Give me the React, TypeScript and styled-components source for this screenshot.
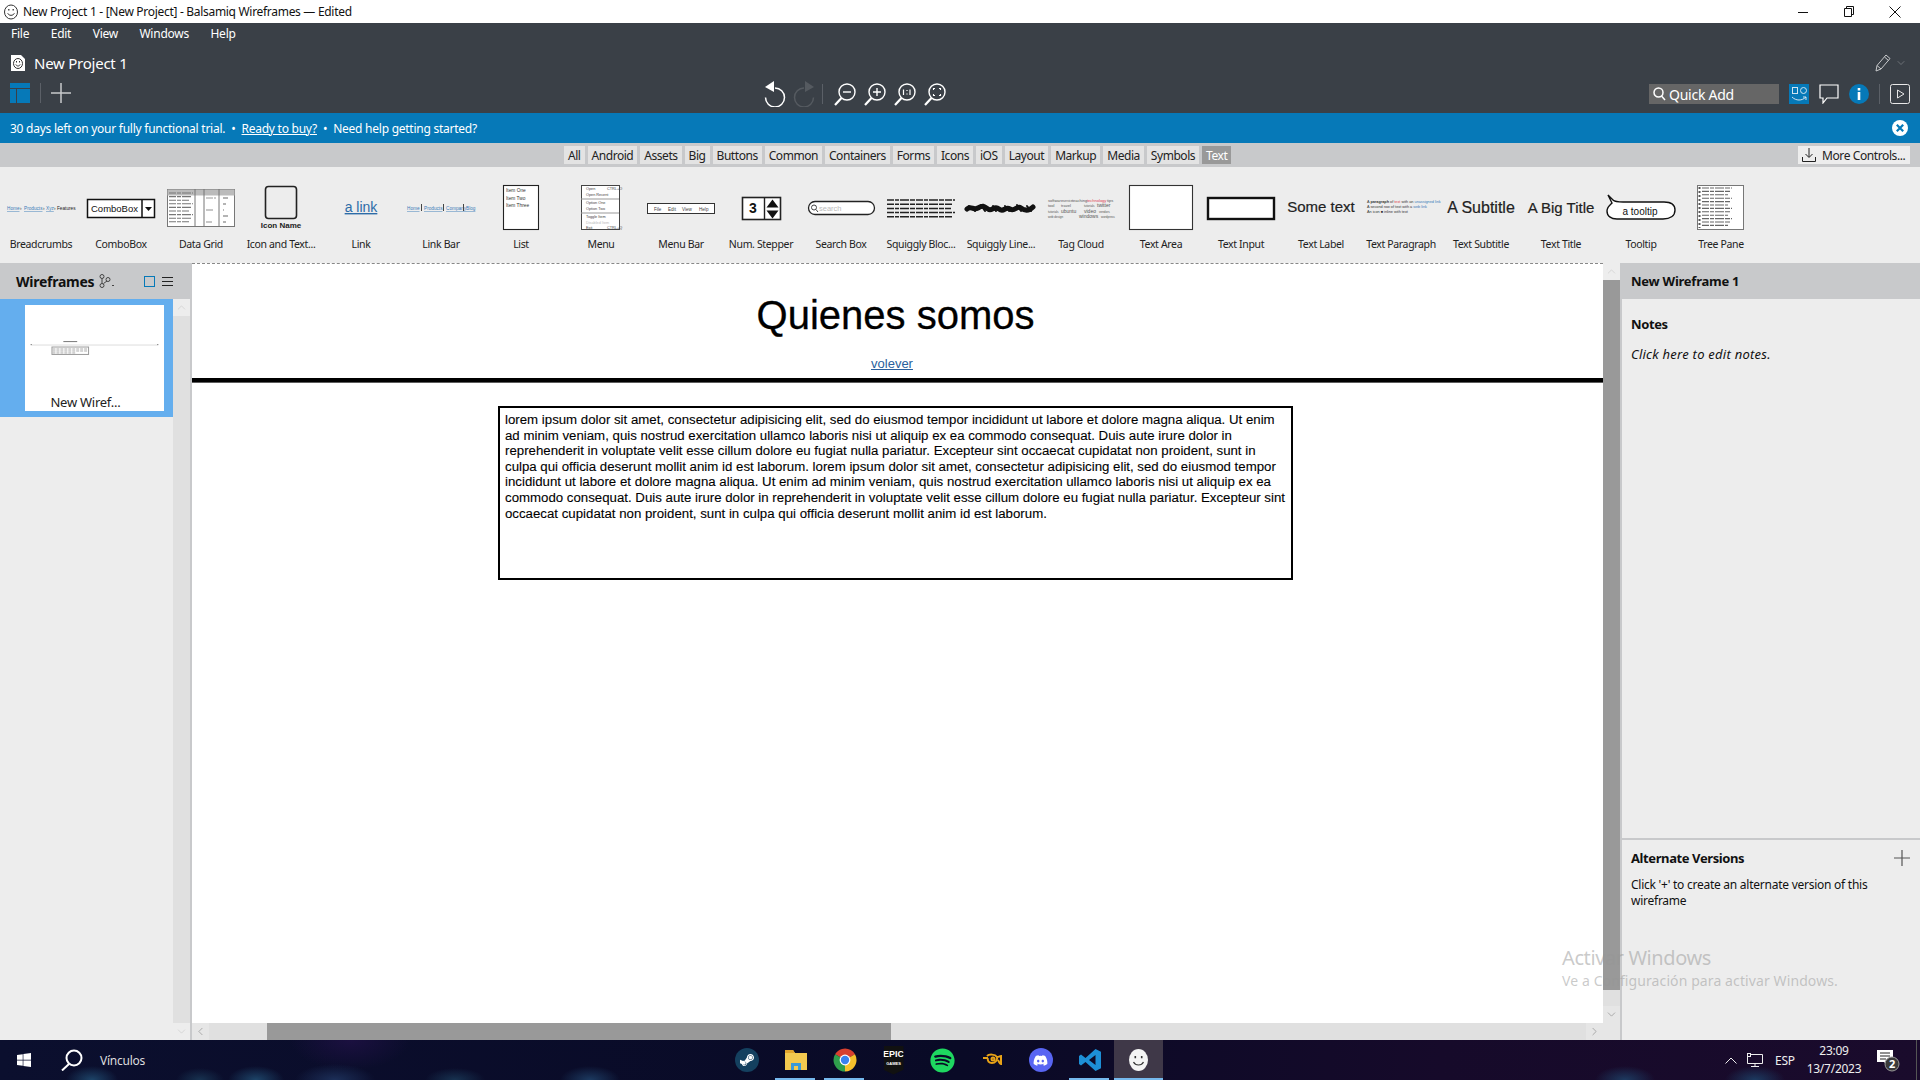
import React from 'react';
import styled, { createGlobalStyle } from 'styled-components';
import { FaDiscord, FaSpotify, FaSteamSymbol, FaWindows } from 'react-icons/fa';
import { ChevronDown, ChevronLeft, ChevronRight, ChevronUp } from 'lucide-react';

const UI_FONT = '"Noto Sans", "Open Sans", sans-serif';
const SKETCH_FONT = '"Liberation Sans", Arial, sans-serif';

const GlobalStyle = createGlobalStyle`
    html, body {
        margin: 0;
        padding: 0;
        background: #ededed;
    }
    body {
        font-family: ${UI_FONT};
        font-size: 12px;
        letter-spacing: -0.25px;
    }
    * {
        box-sizing: border-box;
    }
`;

const Page = styled.div`
    position: relative;
    display: flex;
    flex-direction: column;
    width: 1920px;
    height: 1080px;
    overflow: hidden;
`;

const TitleBar = styled.div`
    display: flex;
    align-items: center;
    height: 23px;
    background: #fff;
    color: #111;
    padding-left: 3px;
`;

const TitleText = styled.span`
    margin-left: 4px;
    letter-spacing: -0.3px;
    white-space: nowrap;
`;

const WindowButtons = styled.div`
    display: flex;
    margin-left: auto;
    margin-right: 2px;
`;

const WindowButton = styled.div`
    display: flex;
    align-items: center;
    justify-content: center;
    width: 46px;
    height: 23px;
`;

const Header = styled.div`
    display: flex;
    flex-direction: column;
    height: 90px;
    background: #3a4047;
    color: #fff;
`;

const MenuRow = styled.div`
    display: flex;
    align-items: center;
    gap: 21.5px;
    height: 20px;
    padding-left: 11px;
`;

const ProjectRow = styled.div`
    display: flex;
    align-items: center;
    height: 38px;
    padding: 2px 13px 0 11px;
`;

const ProjectName = styled.span`
    margin-left: 9px;
    font-size: 15px;
`;

const EditTools = styled.div`
    display: flex;
    align-items: center;
    gap: 4px;
    margin-left: auto;
`;

const ToolRow = styled.div`
    display: flex;
    align-items: flex-start;
    height: 32px;
    padding: 2px 10px 0 0;
`;

const LeftTools = styled.div`
    display: flex;
    align-items: center;
    gap: 10px;
    width: 764px;
    height: 20px;
    padding-left: 10px;
`;

const CenterTools = styled.div`
    display: flex;
    align-items: center;
    gap: 7px;
    height: 26px;
    margin-top: -2px;
`;

const ZoomTools = styled.div`
    display: flex;
    gap: 6px;
    margin-left: 3px;
`;

const RightTools = styled.div`
    display: flex;
    align-items: center;
    gap: 10px;
    height: 20px;
    margin-top: 1px;
    margin-left: auto;
`;

const ToolDivider = styled.div`
    width: 1px;
    height: 20px;
    background: #5b6067;
`;

const QuickAdd = styled.div`
    display: flex;
    align-items: center;
    gap: 3px;
    width: 130px;
    height: 20px;
    padding-left: 4px;
    background: #666;
    font-size: 14px;
`;

const TrialBar = styled.div`
    display: flex;
    align-items: center;
    height: 30px;
    padding: 0 12px 0 10px;
    background: #0679b8;
    color: #fff;
    font-size: 12px;
`;

const TrialDot = styled.span`
    margin: 0 6px;
`;

const TrialLink = styled.span`
    text-decoration: underline;
`;

const TrialClose = styled.div`
    display: flex;
    margin-left: auto;
`;

const TabBar = styled.div`
    display: flex;
    align-items: center;
    gap: 3px;
    height: 24px;
    padding: 0 10px 0 564px;
    background: #c8c9cb;
    color: #222;
`;

const Tab = styled.div<{ $active?: boolean }>`
    height: 18px;
    padding: 0 4px;
    line-height: 19px;
    letter-spacing: -0.45px;
    white-space: nowrap;
    background: ${props => (props.$active ? '#999' : '#e3e3e3')};
    color: ${props => (props.$active ? '#fff' : '#222')};
`;

const MoreControls = styled.div`
    display: flex;
    align-items: center;
    gap: 6px;
    width: 112px;
    height: 18px;
    margin-left: auto;
    padding-left: 4px;
    background: #ededed;
    letter-spacing: -0.4px;
    white-space: nowrap;
`;

const Library = styled.div`
    display: flex;
    height: 96px;
    padding: 8px 0 0 1px;
    background: #ededed;
`;

const LibraryItem = styled.div`
    display: flex;
    flex-direction: column;
    align-items: center;
    width: 80px;
`;

const PreviewSvg = styled.svg`
    display: block;
    width: 80px;
    height: 62px;
    font-family: ${SKETCH_FONT};
    letter-spacing: 0;
`;

const ItemLabel = styled.div`
    height: 14px;
    font-size: 10.5px;
    letter-spacing: -0.35px;
    line-height: 14px;
    color: #222;
    white-space: nowrap;
`;

const Main = styled.div`
    display: flex;
    flex: 1;
    min-height: 0;
`;

const LeftPanel = styled.div`
    display: flex;
    flex-direction: column;
    width: 192px;
    border-right: 2px solid #c8c9cb;
    background: #ededed;
`;

const PanelHeader = styled.div`
    display: flex;
    align-items: center;
    height: 36px;
    background: #c8c9cb;
    color: #111;
    font-size: 14px;
    font-weight: 700;
`;

const WireframesHeader = styled(PanelHeader)`
    padding-left: 16px;
`;

const HeaderIcons = styled.div`
    display: flex;
    align-items: center;
    gap: 7px;
    margin-left: 29px;
`;

const BranchIcon = styled.div`
    display: flex;
    margin-left: 5px;
`;

const ThumbArea = styled.div`
    display: flex;
    flex: 1;
    min-height: 0;
`;

const ThumbList = styled.div`
    flex: 1;
`;

const ThumbRow = styled.div`
    height: 118px;
    padding: 6px 9px 0 25px;
    background: #64aeee;
`;

const ThumbCard = styled.div`
    display: flex;
    flex-direction: column;
    align-items: center;
    height: 106px;
    background: #fff;
`;

const ThumbLabel = styled.div`
    margin-top: -1px;
    margin-right: 18px;
    font-size: 13px;
    color: #222;
`;

const ScrollColumn = styled.div`
    display: flex;
    flex-direction: column;
    width: 17px;
    background: #e0e0e0;
`;

const ScrollButton = styled.div`
    display: flex;
    align-items: center;
    justify-content: center;
    flex: none;
    width: 17px;
    height: 17px;
    background: #ededed;
    color: #c4c4c4;
`;

const DarkScrollButton = styled(ScrollButton)`
    background: #e6e6e6;
    color: #8a8a8a;
`;

const Spacer = styled.div`
    flex: 1;
`;

const VerticalThumb = styled.div`
    flex: none;
    height: 710px;
    background: #999;
`;

const CenterColumn = styled.div`
    display: flex;
    flex-direction: column;
    width: 1428px;
`;

const CanvasRow = styled.div`
    display: flex;
    flex: 1;
    min-height: 0;
`;

const Canvas = styled.div`
    flex: 1;
    border-top: 1px dashed #888;
    background: #fff;
    font-family: ${SKETCH_FONT};
    letter-spacing: 0;
    color: #000;
`;

const SketchTitle = styled.div`
    height: 42px;
    margin-top: 30px;
    padding-right: 4px;
    font-size: 40px;
    line-height: 42px;
    text-align: center;
    -webkit-text-stroke: 0.3px #000;
`;

const SketchLink = styled.div`
    margin-top: 20px;
    padding-right: 11px;
    font-size: 13px;
    line-height: 16px;
    text-align: center;
    color: #2a5f9c;
    text-decoration: underline;
`;

const SketchRule = styled.div`
    height: 5px;
    margin-top: 6px;
    background: linear-gradient(#000 80%, #bbb);
`;

const SketchBox = styled.div`
    width: 795px;
    height: 174px;
    margin: 23px 0 0 306px;
    padding: 4px 0 0 5px;
    border: 2px solid #000;
`;

const SketchLine = styled.div`
    height: 15.6px;
    font-size: 13.25px;
    line-height: 15.6px;
    white-space: nowrap;
    -webkit-text-stroke: 0.1px #000;
`;

const HorizontalScroll = styled.div`
    display: flex;
    flex: none;
    height: 17px;
    background: #e0e0e0;
`;

const HorizontalTrack = styled.div`
    flex: none;
    width: 58px;
`;

const HorizontalThumb = styled.div`
    flex: none;
    width: 624px;
    background: #999;
`;

const RightPanel = styled.div`
    display: flex;
    flex-direction: column;
    flex: 1;
    border-left: 2px solid #c8c9cb;
    background: #ededed;
    color: #111;
`;

const RightHeader = styled(PanelHeader)`
    padding-left: 9px;
    font-size: 13px;
`;

const NotesBlock = styled.div`
    flex: 1;
    padding: 16px 9px 0;
`;

const SectionTitle = styled.div`
    font-size: 13px;
    font-weight: 700;
    letter-spacing: -0.4px;
    line-height: 18px;
`;

const NotesHint = styled.div`
    margin-top: 12px;
    font-size: 13px;
    font-style: italic;
    letter-spacing: 0.25px;
    line-height: 18px;
`;

const VersionsBlock = styled.div`
    height: 202px;
    padding: 9px 10px 0 9px;
    border-top: 2px solid #c8c9cb;
`;

const VersionsHead = styled.div`
    display: flex;
    align-items: center;
    justify-content: space-between;
`;

const VersionsText = styled.div`
    width: 250px;
    margin-top: 10px;
    line-height: 16px;
`;

const Taskbar = styled.div`
    display: flex;
    flex: none;
    align-items: stretch;
    height: 40px;
    color: #ddd;
    background:
        radial-gradient(26px 14px at 92px 100%, #1d4468, transparent),
        radial-gradient(24px 12px at 200px 100%, #173250, transparent),
        radial-gradient(28px 14px at 256px 100%, #1d4468, transparent),
        radial-gradient(40px 16px at 335px 100%, #1c2f58, transparent),
        radial-gradient(30px 12px at 455px 100%, #173250, transparent),
        radial-gradient(30px 14px at 590px 100%, #1c3a60, transparent),
        radial-gradient(30px 14px at 1625px 100%, #1d3a60, transparent),
        radial-gradient(30px 14px at 1755px 100%, #1c3a60, transparent),
        radial-gradient(60px 30px at 350px 0, #1b1040, transparent),
        linear-gradient(90deg, #0b0f2e, #090a26 50%, #160a2a 75%, #1a0b2c);
`;

const TaskLeft = styled.div`
    display: flex;
    align-items: center;
    flex: none;
    width: 722px;
`;

const StartTile = styled.div`
    display: flex;
    align-items: center;
    justify-content: center;
    width: 48px;
`;

const SearchTile = styled(StartTile)`
    margin-right: 4px;
`;

const TaskTile = styled.div<{ $open?: boolean; $active?: boolean }>`
    position: relative;
    display: flex;
    align-items: center;
    justify-content: center;
    flex: none;
    width: 49px;
    background: ${props => (props.$active ? '#3f3848' : 'transparent')};

    &::after {
        content: '';
        display: ${props => (props.$open ? 'block' : 'none')};
        position: absolute;
        left: ${props => (props.$active ? '0' : '4px')};
        right: ${props => (props.$active ? '0' : '5px')};
        bottom: 0;
        height: 2px;
        background: #76b9ed;
    }
`;

const EpicBadge = styled.div`
    display: flex;
    flex-direction: column;
    align-items: center;
    width: 20px;
    height: 29px;
    padding-top: 3px;
    background: #111;
    clip-path: polygon(0 0, 100% 0, 100% 84%, 50% 100%, 0 84%);
    color: #fff;
    font-family: ${SKETCH_FONT};
    font-weight: 700;
    letter-spacing: 0;
`;

const EpicWord = styled.span`
    font-size: 9px;
    line-height: 11px;
`;

const EpicSmall = styled.span`
    font-size: 4px;
    line-height: 7px;
`;

const Tray = styled.div`
    display: flex;
    align-items: center;
    margin-left: auto;
`;

const TrayCell = styled.div<{ $width: number }>`
    display: flex;
    align-items: center;
    justify-content: center;
    width: ${props => props.$width}px;
    color: #eee;
`;

const Clock = styled.div`
    display: flex;
    flex-direction: column;
    align-items: center;
    width: 62px;
    line-height: 18px;
    color: #eee;
    white-space: nowrap;
`;

const ShowDesktop = styled.div`
    align-self: stretch;
    width: 9px;
    margin-left: 0;
    padding-left: 5px;

    &::before {
        content: '';
        display: block;
        width: 1px;
        height: 100%;
        background: #555;
    }
`;

const Watermark = styled.div`
    position: absolute;
    left: 1562px;
    top: 944px;
    color: rgba(150, 150, 150, 0.5);
    pointer-events: none;
    white-space: nowrap;
`;

const WatermarkTitle = styled.div`
    font-size: 20px;
    letter-spacing: -0.4px;
    line-height: 28px;
`;

const WatermarkText = styled.div`
    font-size: 14px;
    letter-spacing: 0.1px;
    line-height: 18px;
`;

const Magnifier = ({ children }: { children?: React.ReactNode }) => (
    <svg width="24" height="24" viewBox="0 0 24 24" fill="none" stroke="#fff" strokeWidth="1.4">
        <circle cx="14" cy="10" r="8" />
        <path d="M8.5 16 L2 23" strokeWidth="2.2" />
        {children}
    </svg>
);

const UndoIcon = ({ color, flip }: { color: string; flip?: boolean }) => (
    <svg
        width="22"
        height="26"
        viewBox="0 0 22 26"
        fill="none"
        stroke={color}
        strokeWidth="1.5"
        style={flip ? { transform: 'scaleX(-1)' } : undefined}
    >
        <path d="M11 7 A9.5 9.5 0 1 1 1.5 16.5" />
        <path d="M10 0 L10 11 L1 6 Z" fill={color} stroke="none" />
    </svg>
);

const Smiley = ({ size, color }: { size: number; color: string }) => (
    <svg width={size} height={size} viewBox="0 0 16 16" fill="none" stroke={color} strokeWidth="1">
        <ellipse cx="8" cy="8" rx="6.5" ry="7" />
        <path d="M4.7 9.3 C6 12 10 12 11.4 9.3" />
        <path d="M5.8 5 V6.6 M10.2 5 V6.6" strokeWidth="1.3" />
    </svg>
);

const TinyLines = ({ x, y, rows, width, gap, color = '#222', weight = 1.1 }: { x: number; y: number; rows: number; width: number; gap: number; color?: string; weight?: number }) => (
    <g stroke={color} strokeWidth={weight} strokeDasharray="7 1 4 1 9 1 5 1">
        {Array.from({ length: rows }).map((_, i) => (
            <line key={i} x1={x} y1={y + i * gap} x2={x + width - (i % 3) * 2} y2={y + i * gap} />
        ))}
    </g>
);

const previews: Record<string, React.ReactNode> = {
    Breadcrumbs: (
        <g fontSize="4.7">
            <text x="6" y="35" fill="#3b7cb8" textDecoration="underline">Home</text>
            <text x="19" y="35" fill="#333">›</text>
            <text x="23" y="35" fill="#3b7cb8" textDecoration="underline">Products</text>
            <text x="42" y="35" fill="#333">›</text>
            <text x="45" y="35" fill="#3b7cb8" textDecoration="underline">Xyz</text>
            <text x="53" y="35" fill="#333">›</text>
            <text x="56" y="35" fill="#222">Features</text>
        </g>
    ),
    ComboBox: (
        <g>
            <rect x="6.5" y="24.5" width="67" height="18" fill="#fff" stroke="#111" strokeWidth="1.5" />
            <line x1="61" y1="24" x2="61" y2="43" stroke="#111" strokeWidth="1.5" />
            <path d="M64 32 H71 L67.5 36 Z" fill="#111" />
            <text x="10" y="37" fontSize="9.5" fill="#111">ComboBox</text>
        </g>
    ),
    'Data Grid': (
        <g>
            <rect x="6.5" y="14.5" width="67" height="37" fill="#fff" stroke="#777" />
            <rect x="6.5" y="14.5" width="67" height="6" fill="#bbb" />
            <line x1="34" y1="14" x2="34" y2="52" stroke="#777" />
            <line x1="43" y1="14" x2="43" y2="52" stroke="#777" />
            <line x1="58" y1="14" x2="58" y2="52" stroke="#777" />
            <TinyLines x={8} y={18} rows={9} width={24} gap={3.6} color="#777" />
            <TinyLines x={45} y={23} rows={3} width={10} gap={12} color="#999" />
            <TinyLines x={62} y={23} rows={5} width={5} gap={6} color="#777" />
        </g>
    ),
    'Icon and Text...': (
        <g>
            <rect x="24.5" y="11.5" width="31" height="32" rx="3" fill="none" stroke="#222" strokeWidth="1.6" />
            <text x="40" y="53" fontSize="8" fill="#222" textAnchor="middle" fontWeight="700">Icon Name</text>
        </g>
    ),
    Link: <text x="40" y="37" fontSize="14" fill="#2d6ca8" textAnchor="middle" textDecoration="underline">a link</text>,
    'Link Bar': (
        <g fontSize="4.7" fill="#3b7cb8" textDecoration="underline">
            <text x="6" y="35">Home</text>
            <text x="23" y="35">Products</text>
            <text x="45" y="35">Company</text>
            <text x="65" y="35">Blog</text>
            <path d="M20.5 29 V36 M42.5 29 V36 M62.5 29 V36" stroke="#444" />
        </g>
    ),
    List: (
        <g>
            <rect x="22.5" y="10.5" width="35" height="44" fill="#fff" stroke="#222" strokeWidth="1.1" />
            <g fontSize="4.8" fill="#333">
                <text x="25" y="17">Item One</text>
                <text x="25" y="24.5">Item Two</text>
                <text x="25" y="32">Item Three</text>
            </g>
        </g>
    ),
    Menu: (
        <g>
            <rect x="20.5" y="10.5" width="38" height="44" fill="#fff" stroke="#444" />
            <g fontSize="3.8" fill="#444">
                <text x="25" y="15">Open</text>
                <text x="46" y="15">CTRL+O</text>
                <text x="25" y="21">Open Recent</text>
                <text x="25" y="29">Option One</text>
                <text x="25" y="35">Option Two</text>
                <text x="25" y="43">Toggle Item</text>
                <text x="25" y="49" fill="#bbb">Disabled Item</text>
                <text x="25" y="54">Exit</text>
                <text x="46" y="54">CTRL+Q</text>
            </g>
            <path d="M20 24 H58 M20 38 H58" stroke="#999" strokeWidth="1.2" />
        </g>
    ),
    'Menu Bar': (
        <g>
            <rect x="6.5" y="28.5" width="67" height="10" fill="#fff" stroke="#333" />
            <g fontSize="4.6" fill="#444">
                <text x="13" y="35.5">File</text>
                <text x="27" y="35.5">Edit</text>
                <text x="41" y="35.5">View</text>
                <text x="58" y="35.5">Help</text>
            </g>
        </g>
    ),
    'Num. Stepper': (
        <g>
            <rect x="21.5" y="22.5" width="38" height="22" fill="#fff" stroke="#222" strokeWidth="1.6" />
            <line x1="43.5" y1="22" x2="43.5" y2="45" stroke="#222" strokeWidth="1.4" />
            <text x="32" y="38" fontSize="14" fontWeight="700" textAnchor="middle" fill="#111">3</text>
            <path d="M45.5 32.5 L51.5 24.5 L57.5 32.5 Z M45.5 35.5 H57.5 L51.5 43.5 Z" fill="#111" />
        </g>
    ),
    'Search Box': (
        <g>
            <rect x="7.5" y="26.5" width="66" height="13" rx="6.5" fill="#fff" stroke="#222" strokeWidth="1.3" />
            <circle cx="13" cy="32.5" r="2.5" fill="none" stroke="#444" />
            <path d="M15 34.5 L17 37" stroke="#444" />
            <text x="18" y="35.5" fontSize="7.5" fill="#bbb">search</text>
        </g>
    ),
    'Squiggly Bloc...': (
        <g transform="translate(6 23)">
            <TinyLines x={0} y={2} rows={5} width={68} gap={4.2} weight={1.5} />
        </g>
    ),
    'Squiggly Line...': (
        <g fill="none" stroke="#111" strokeLinecap="round">
            <path d="M6 34 C10 30 12 36 17 33 S23 31 27 34 S33 30 38 34 S44 31 49 34 S56 30 60 33 S68 36 72 32" strokeWidth="5" />
            <path d="M8 31 L14 36 M20 30 L24 36 M32 31 L35 36 M44 31 L48 36 M56 30 L60 36 M66 31 L70 36" strokeWidth="2" />
        </g>
    ),
    'Tag Cloud': (
        <g fontSize="4" fill="#555">
            <text x="7" y="27">software</text>
            <text x="22" y="27" fontSize="3">service</text>
            <text x="31" y="27">teaching</text>
            <text x="46" y="27" fill="#e04050">technology</text>
            <text x="66" y="27">tips</text>
            <text x="7" y="32">tool</text>
            <text x="20" y="32">travel</text>
            <text x="43" y="32" fontSize="3">tutorials</text>
            <text x="56" y="32" fontSize="5">twitter</text>
            <text x="7" y="37.5" fontSize="3">tutorials</text>
            <text x="20" y="37.5" fontSize="5">ubuntu</text>
            <text x="43" y="37.5" fontSize="5">video</text>
            <text x="58" y="37.5" fontSize="3">vendors</text>
            <text x="7" y="42.5" fontSize="3">web design</text>
            <text x="38" y="42.5" fontSize="5">windows</text>
            <text x="60" y="42.5" fontSize="3">wordpress</text>
        </g>
    ),
    'Text Area': <rect x="8.5" y="10.5" width="63" height="44" fill="#fff" stroke="#333" strokeWidth="1.1" />,
    'Text Input': <rect x="7" y="23" width="66" height="21" fill="#fff" stroke="#111" strokeWidth="2.4" />,
    'Text Label': <text x="40" y="37" fontSize="15" fill="#222" stroke="#222" strokeWidth="0.2" textAnchor="middle">Some text</text>,
    'Text Paragraph': (
        <g fontSize="3.8" fill="#333">
            <text x="6" y="28">A <tspan fontWeight="700">paragraph</tspan> of <tspan fill="#e04050">text</tspan> with an <tspan fill="#3b7cb8">unassigned link</tspan></text>
            <text x="6" y="33">A second row of text with a <tspan fill="#3b7cb8">web link</tspan></text>
            <text x="6" y="38">An icon ■ inline with text</text>
        </g>
    ),
    'Text Subtitle': <text x="40" y="37.5" fontSize="16" fill="#222" stroke="#222" strokeWidth="0.2" textAnchor="middle">A Subtitle</text>,
    'Text Title': <text x="40" y="38" fontSize="15" fill="#222" stroke="#222" strokeWidth="0.2" textAnchor="middle">A Big Title</text>,
    Tooltip: (
        <g>
            <path
                d="M7 20 L12 25 C14 27 18 27 22 27 H63 C70 27 74 30 74 35 C74 41 69 44 62 44 H16 C10 44 6 41 6 36 C6 32 9 30 11 28 Z"
                fill="#fff"
                stroke="#111"
                strokeWidth="1.4"
            />
            <text x="39" y="40" fontSize="10" fill="#111" textAnchor="middle">a tooltip</text>
        </g>
    ),
    'Tree Pane': (
        <g>
            <rect x="16.5" y="10.5" width="46" height="44" fill="#fff" stroke="#777" />
            <TinyLines x={21} y={13} rows={12} width={30} gap={3.4} color="#666" />
            <line x1="18.5" y1="12" x2="18.5" y2="53" stroke="#555" strokeWidth="2" strokeDasharray="2 2" />
        </g>
    ),
};

const tabs = ['All', 'Android', 'Assets', 'Big', 'Buttons', 'Common', 'Containers', 'Forms', 'Icons', 'iOS', 'Layout', 'Markup', 'Media', 'Symbols'];

const bodyLines = [
    'lorem ipsum dolor sit amet, consectetur adipisicing elit, sed do eiusmod tempor incididunt ut labore et dolore magna aliqua. Ut enim',
    'ad minim veniam, quis nostrud exercitation ullamco laboris nisi ut aliquip ex ea commodo consequat. Duis aute irure dolor in',
    'reprehenderit in voluptate velit esse cillum dolore eu fugiat nulla pariatur. Excepteur sint occaecat cupidatat non proident, sunt in',
    'culpa qui officia deserunt mollit anim id est laborum. lorem ipsum dolor sit amet, consectetur adipisicing elit, sed do eiusmod tempor',
    'incididunt ut labore et dolore magna aliqua. Ut enim ad minim veniam, quis nostrud exercitation ullamco laboris nisi ut aliquip ex ea',
    'commodo consequat. Duis aute irure dolor in reprehenderit in voluptate velit esse cillum dolore eu fugiat nulla pariatur. Excepteur sint',
    'occaecat cupidatat non proident, sunt in culpa qui officia deserunt mollit anim id est laborum.',
];

const App = () => (
    <Page>
        <GlobalStyle />
        <TitleBar>
            <Smiley size={16} color="#333" />
            <TitleText>New Project 1 - [New Project] - Balsamiq Wireframes — Edited</TitleText>
            <WindowButtons>
                <WindowButton>
                    <svg width="10" height="10" stroke="#111"><path d="M0 5.5 H10" /></svg>
                </WindowButton>
                <WindowButton>
                    <svg width="10" height="11" fill="none" stroke="#111"><path d="M0.5 2.5 H7.5 V10.5 H0.5 Z M2.5 2.5 V0.5 H9.5 V8.5 H7.5" /></svg>
                </WindowButton>
                <WindowButton>
                    <svg width="12" height="12" stroke="#111"><path d="M0.5 0.5 L11.5 11.5 M11.5 0.5 L0.5 11.5" /></svg>
                </WindowButton>
            </WindowButtons>
        </TitleBar>

        <Header>
            <MenuRow>
                <span>File</span>
                <span>Edit</span>
                <span>View</span>
                <span>Windows</span>
                <span>Help</span>
            </MenuRow>
            <ProjectRow>
                <svg width="14" height="16" viewBox="0 0 14 16">
                    <path d="M0 0 H10 L14 4 V16 H0 Z" fill="#fff" />
                    <ellipse cx="7" cy="8.5" rx="4.5" ry="5" fill="none" stroke="#333" />
                    <path d="M4.8 9.5 C6 11.5 8 11.5 9.2 9.5 M5.5 6 V7.5 M8.5 6 V7.5" fill="none" stroke="#333" />
                </svg>
                <ProjectName>New Project 1</ProjectName>
                <EditTools>
                    <svg width="16" height="18" viewBox="0 0 16 18" fill="none" stroke="#c8cacc">
                        <path d="M1 17 L2 11.5 L11 1 L15 4.5 L6 15 Z M9.5 3 L13.5 6.5 M2 11.5 L6 15" />
                    </svg>
                    <ChevronDown size={12} color="#8d9095" strokeWidth={1.2} />
                </EditTools>
            </ProjectRow>
            <ToolRow>
                <LeftTools>
                    <svg width="20" height="20" viewBox="0 0 20 20" fill="#0679b8">
                        <rect width="20" height="5" />
                        <rect y="6" width="6" height="14" />
                        <rect x="7" y="6" width="13" height="14" />
                    </svg>
                    <ToolDivider />
                    <svg width="20" height="20" stroke="#c8c9cb" strokeWidth="1.5"><path d="M10 0 V20 M0 10 H20" /></svg>
                </LeftTools>
                <CenterTools>
                    <UndoIcon color="#fff" />
                    <UndoIcon color="#555a60" flip />
                    <ToolDivider />
                    <ZoomTools>
                        <Magnifier><path d="M10 10 H18" /></Magnifier>
                        <Magnifier><path d="M10 10 H18 M14 6 V14" /></Magnifier>
                        <Magnifier><path d="M10.5 7.5 V13 M14 8 V9 M14 11.5 V12.5 M17 7.5 V13" strokeWidth="1.2" /></Magnifier>
                        <Magnifier><path d="M10.5 8 V6.5 H12 M16 6.5 H17.5 V8 M17.5 12 V13.5 H16 M12 13.5 H10.5 V12" strokeWidth="1.1" /></Magnifier>
                    </ZoomTools>
                </CenterTools>
                <RightTools>
                    <QuickAdd>
                        <svg width="13" height="14" viewBox="0 0 13 14" fill="none" stroke="#fff" strokeWidth="1.5">
                            <circle cx="5.5" cy="5.5" r="4.5" />
                            <path d="M8.5 9 L12 13" />
                        </svg>
                        Quick Add
                    </QuickAdd>
                    <svg width="20" height="20" viewBox="0 0 20 20" fill="none" stroke="#cfe3f0">
                        <rect width="20" height="20" fill="#0679b8" stroke="none" />
                        <rect x="3.5" y="3.5" width="5" height="6" />
                        <circle cx="14.5" cy="6.5" r="3" />
                        <path d="M3 13 C7 17 13 17 17 13 M14 13 H17 V16" />
                    </svg>
                    <svg width="20" height="20" viewBox="0 0 20 20" fill="none" stroke="#fff" strokeWidth="1.2">
                        <path d="M1 1 H19 V14 H8 L4 19 V14 H1 Z" />
                    </svg>
                    <svg width="20" height="20" viewBox="0 0 20 20">
                        <circle cx="10" cy="10" r="10" fill="#0679b8" />
                        <path d="M8.7 4 H11.3 V6.6 H8.7 Z M8.7 8 H11.3 V16 H8.7 Z" fill="#fff" />
                    </svg>
                    <ToolDivider />
                    <svg width="20" height="20" viewBox="0 0 20 20" fill="none" stroke="#e8e8e8">
                        <rect x="0.5" y="0.5" width="19" height="19" rx="2" />
                        <path d="M7.5 6 L14 10 L7.5 14 Z" />
                    </svg>
                </RightTools>
            </ToolRow>
        </Header>

        <TrialBar>
            30 days left on your fully functional trial.
            <TrialDot>•</TrialDot>
            <TrialLink>Ready to buy?</TrialLink>
            <TrialDot>•</TrialDot>
            Need help getting started?
            <TrialClose>
                <svg width="16" height="16" viewBox="0 0 16 16">
                    <circle cx="8" cy="8" r="8" fill="#fff" />
                    <path d="M4.8 4.8 L11.2 11.2 M11.2 4.8 L4.8 11.2" stroke="#0679b8" strokeWidth="2.2" />
                </svg>
            </TrialClose>
        </TrialBar>

        <TabBar>
            {tabs.map(name => (
                <Tab key={name}>{name}</Tab>
            ))}
            <Tab $active>Text</Tab>
            <MoreControls>
                <svg width="14" height="14" viewBox="0 0 14 14" fill="none" stroke="#222">
                    <path d="M7 0 V9 M3.5 6 L7 9.5 L10.5 6 M0.5 9 V13.5 H13.5 V9" />
                </svg>
                More Controls...
            </MoreControls>
        </TabBar>

        <Library>
            {Object.keys(previews).map(name => (
                <LibraryItem key={name}>
                    <PreviewSvg viewBox="0 0 80 62">{previews[name]}</PreviewSvg>
                    <ItemLabel>{name}</ItemLabel>
                </LibraryItem>
            ))}
        </Library>

        <Main>
            <LeftPanel>
                <WireframesHeader>
                    Wireframes
                    <BranchIcon>
                        <svg width="16" height="14" viewBox="0 0 16 14" fill="none" stroke="#444">
                            <circle cx="3" cy="2.5" r="2" />
                            <circle cx="3" cy="11.5" r="2" />
                            <circle cx="9" cy="5.5" r="2" />
                            <path d="M3 4.5 V9.5 M4.5 9.5 L8 7 M13 11 L14 12 L15 11" />
                        </svg>
                    </BranchIcon>
                    <HeaderIcons>
                        <svg width="11" height="11" fill="none" stroke="#0679b8"><rect x="0.5" y="0.5" width="10" height="10" /></svg>
                        <svg width="11" height="11" stroke="#222"><path d="M0 1.5 H11 M0 5.5 H11 M0 9.5 H11" /></svg>
                    </HeaderIcons>
                </WireframesHeader>
                <ThumbArea>
                    <ThumbList>
                        <ThumbRow>
                            <ThumbCard>
                                <svg width="139" height="90" viewBox="0 0 139 90">
                                    <path d="M38 37 H52" stroke="#777" />
                                    <path d="M5 40.5 H134" stroke="#ddd" />
                                    <path d="M5 40 H6 M133 40 H134" stroke="#666" />
                                    <rect x="26.5" y="42.5" width="37" height="7.5" fill="#fff" stroke="#999" />
                                    <path d="M27 44.5 H63 M27 46.5 H63 M27 48.5 H50" stroke="#aaa" strokeDasharray="3 1" />
                                </svg>
                                <ThumbLabel>New Wiref...</ThumbLabel>
                            </ThumbCard>
                        </ThumbRow>
                    </ThumbList>
                    <ScrollColumn>
                        <ScrollButton><ChevronUp size={13} strokeWidth={1} /></ScrollButton>
                        <Spacer />
                        <ScrollButton><ChevronDown size={13} strokeWidth={1} /></ScrollButton>
                    </ScrollColumn>
                </ThumbArea>
            </LeftPanel>

            <CenterColumn>
                <CanvasRow>
                    <Canvas>
                        <SketchTitle>Quienes somos</SketchTitle>
                        <SketchLink>volever</SketchLink>
                        <SketchRule />
                        <SketchBox>
                            {bodyLines.map(line => (
                                <SketchLine key={line}>{line}</SketchLine>
                            ))}
                        </SketchBox>
                    </Canvas>
                    <ScrollColumn>
                        <ScrollButton><ChevronUp size={13} strokeWidth={1} /></ScrollButton>
                        <VerticalThumb />
                        <Spacer />
                        <DarkScrollButton><ChevronDown size={13} strokeWidth={1.2} /></DarkScrollButton>
                    </ScrollColumn>
                </CanvasRow>
                <HorizontalScroll>
                    <DarkScrollButton><ChevronLeft size={13} strokeWidth={1.2} /></DarkScrollButton>
                    <HorizontalTrack />
                    <HorizontalThumb />
                    <Spacer />
                    <DarkScrollButton><ChevronRight size={13} strokeWidth={1.2} /></DarkScrollButton>
                    <DarkScrollButton />
                </HorizontalScroll>
            </CenterColumn>

            <RightPanel>
                <RightHeader>New Wireframe 1</RightHeader>
                <NotesBlock>
                    <SectionTitle>Notes</SectionTitle>
                    <NotesHint>Click here to edit notes.</NotesHint>
                </NotesBlock>
                <VersionsBlock>
                    <VersionsHead>
                        <SectionTitle>Alternate Versions</SectionTitle>
                        <svg width="16" height="16" stroke="#555" strokeWidth="1.2"><path d="M8 0 V16 M0 8 H16" /></svg>
                    </VersionsHead>
                    <VersionsText>Click '+' to create an alternate version of this wireframe</VersionsText>
                </VersionsBlock>
            </RightPanel>
        </Main>

        <Taskbar>
            <TaskLeft>
                <StartTile><FaWindows size={16} color="#fff" /></StartTile>
                <SearchTile>
                    <svg width="22" height="22" viewBox="0 0 22 22" fill="none" stroke="#fff" strokeWidth="2">
                        <circle cx="13" cy="9" r="7.5" />
                        <path d="M8 15 L1 21.5" />
                    </svg>
                </SearchTile>
                Vínculos
            </TaskLeft>
            <TaskTile>
                <svg width="24" height="24" viewBox="0 0 24 24">
                    <circle cx="12" cy="12" r="12" fill="#14405f" />
                </svg>
                <FaSteamSymbol size={16} color="#fff" style={{ position: 'absolute' }} />
            </TaskTile>
            <TaskTile $open>
                <svg width="22" height="22" viewBox="0 0 22 22">
                    <path d="M0 1 H8 L10 4 H22 V21 H0 Z" fill="#f3c94f" />
                    <path d="M0 1 H8 L10 4 H0 Z" fill="#e2a52c" />
                    <path d="M6 14 H16 V21 H13 V17 H9 V21 H6 Z" fill="#3a9ad9" />
                </svg>
            </TaskTile>
            <TaskTile $open>
                <svg width="24" height="24" viewBox="0 0 24 24" fill="none" strokeWidth="7">
                    <circle cx="12" cy="12" r="8" stroke="#d8402f" strokeDasharray="16.76 33.51" transform="rotate(210 12 12)" />
                    <circle cx="12" cy="12" r="8" stroke="#f6c02c" strokeDasharray="16.76 33.51" transform="rotate(330 12 12)" />
                    <circle cx="12" cy="12" r="8" stroke="#2f9e4c" strokeDasharray="16.76 33.51" transform="rotate(90 12 12)" />
                    <circle cx="12" cy="12" r="5.4" fill="#fff" stroke="none" />
                    <circle cx="12" cy="12" r="4.2" fill="#3a82f0" stroke="none" />
                </svg>
            </TaskTile>
            <TaskTile>
                <EpicBadge>
                    <EpicWord>EPIC</EpicWord>
                    <EpicSmall>GAMES</EpicSmall>
                </EpicBadge>
            </TaskTile>
            <TaskTile><FaSpotify size={25} color="#1ed760" /></TaskTile>
            <TaskTile>
                <svg width="20" height="14" viewBox="0 0 20 14" fill="none" stroke="#e8a317" strokeWidth="2">
                    <path d="M1 5 H6 M5 3 C7 1 13 1 15 4 C16 7 13 10 10 10 C7 10 5 8 6 5 M16 7 C17 9 18 11 19 11 V3 C18 3 17 4 15 4" />
                    <circle cx="11" cy="6" r="1.5" />
                </svg>
            </TaskTile>
            <TaskTile>
                <svg width="24" height="24" viewBox="0 0 24 24">
                    <circle cx="12" cy="12" r="12" fill="#5865f2" />
                </svg>
                <FaDiscord size={15} color="#fff" style={{ position: 'absolute' }} />
            </TaskTile>
            <TaskTile $open>
                <svg width="24" height="24" viewBox="0 0 24 24">
                    <path
                        fillRule="evenodd"
                        d="M17.5 1 L23 3.7 V20.3 L17.5 23 L7.5 14 L3 17.5 L1 16 V8 L3 6.5 L7.5 10 Z M17.5 7 L11 12 L17.5 17 Z"
                        fill="#1d8fd6"
                    />
                </svg>
            </TaskTile>
            <TaskTile $open $active>
                <svg width="19" height="22" viewBox="0 0 19 22">
                    <ellipse cx="9.5" cy="11" rx="9.5" ry="11" fill="#f4f4f4" />
                    <path d="M4.5 13 C6.5 17 12.5 17 14.5 13" fill="none" stroke="#333" strokeWidth="1.2" />
                    <path d="M6.3 7 V9.3 M12.7 7 V9.3" stroke="#333" strokeWidth="1.6" />
                </svg>
            </TaskTile>
            <Tray>
                <TrayCell $width={24}>
                    <svg width="12" height="7" fill="none" stroke="#eee"><path d="M0.5 6.5 L6 1 L11.5 6.5" /></svg>
                </TrayCell>
                <TrayCell $width={24}>
                    <svg width="16" height="14" viewBox="0 0 16 14" fill="none" stroke="#eee">
                        <path d="M3 1.5 H15.5 V10.5 H0.5 V4 M8 10.5 V13 M4 13.5 H12" />
                        <rect x="0.5" y="0.5" width="3" height="3" />
                    </svg>
                </TrayCell>
                <TrayCell $width={36}>ESP</TrayCell>
                <Clock>
                    <span>23:09</span>
                    <span>13/7/2023</span>
                </Clock>
                <TrayCell $width={46}>
                    <svg width="24" height="24" viewBox="0 0 24 24">
                        <path d="M1 2 H17 V14 H12 V18 L8 14 H1 Z" fill="#fff" />
                        <path d="M4 5 H14 M4 8 H14 M4 11 H10" stroke="#222" />
                        <circle cx="16" cy="16" r="7" fill="#3a3a3a" stroke="#999" />
                        <text x="16" y="20" fontSize="11" fontWeight="700" fill="#fff" textAnchor="middle">2</text>
                    </svg>
                </TrayCell>
                <ShowDesktop />
            </Tray>
        </Taskbar>

        <Watermark>
            <WatermarkTitle>Activar Windows</WatermarkTitle>
            <WatermarkText>Ve a Configuración para activar Windows.</WatermarkText>
        </Watermark>
    </Page>
);

export default App;
